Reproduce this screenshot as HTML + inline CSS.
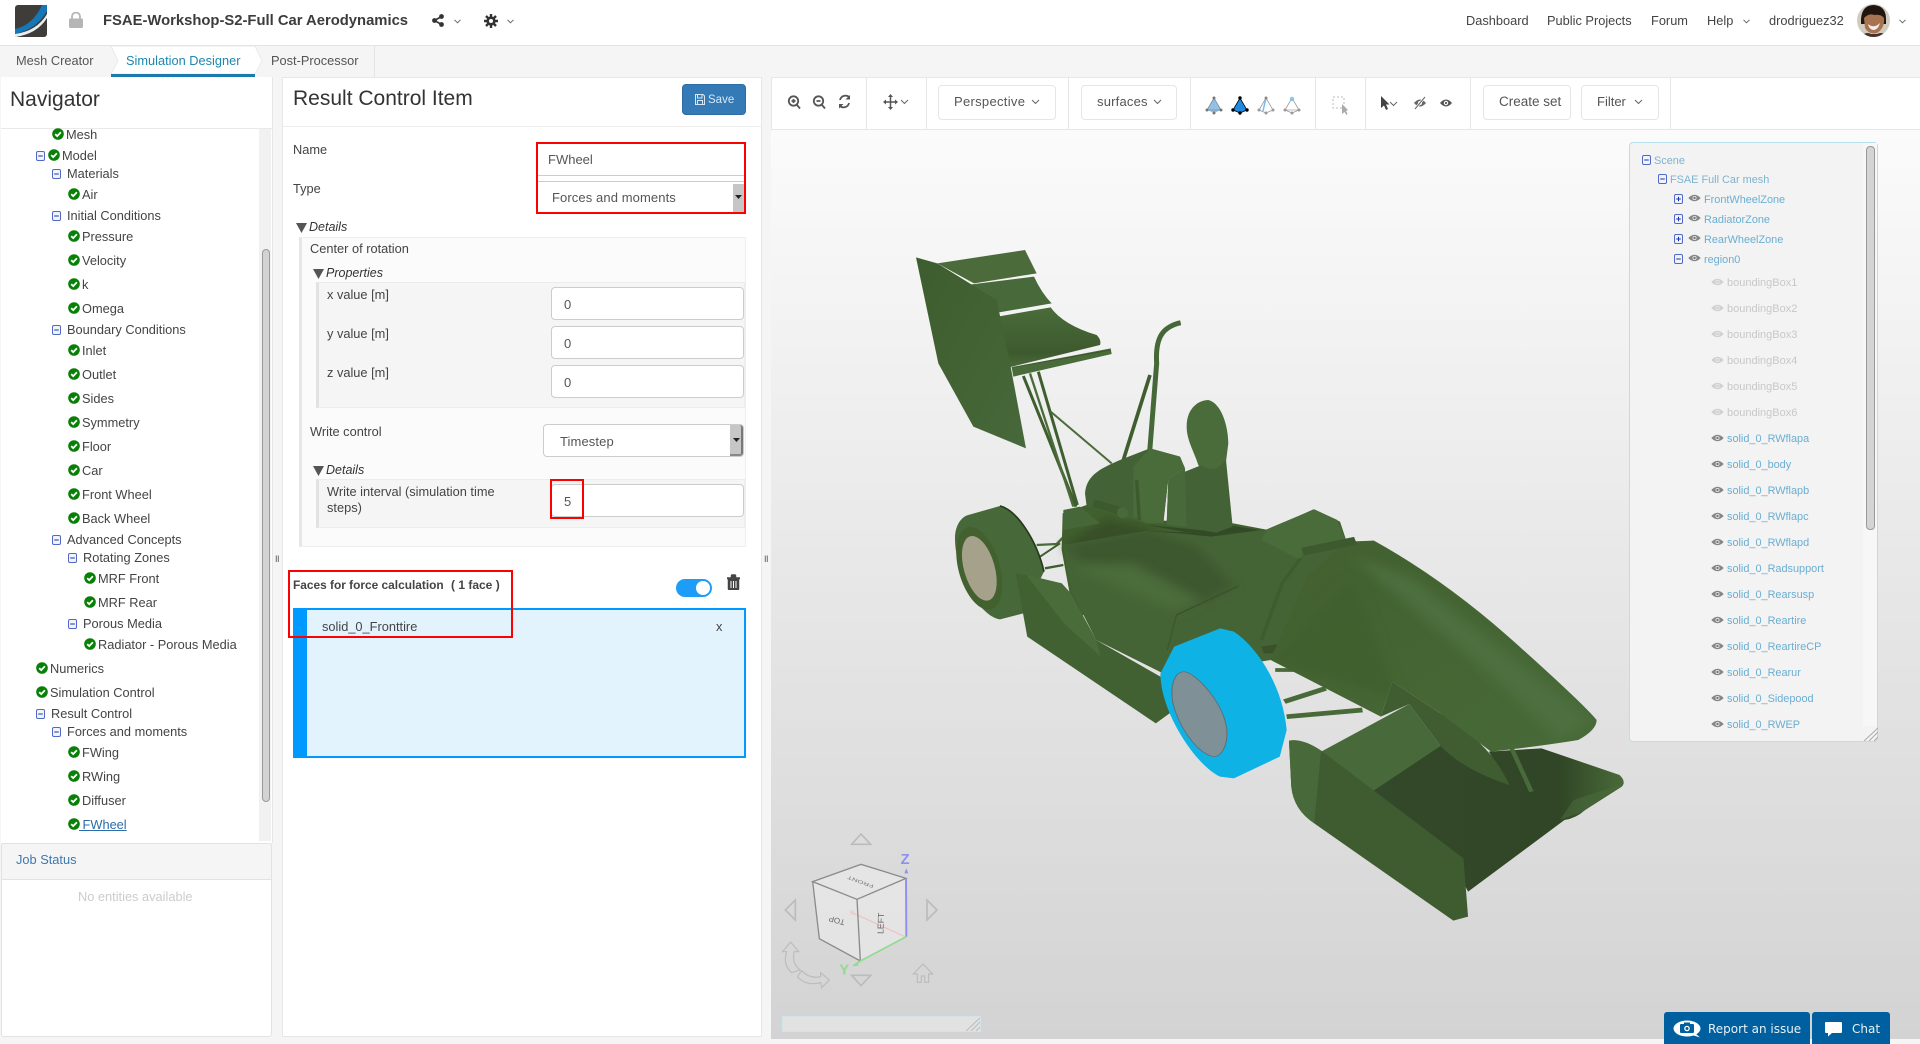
<!DOCTYPE html>
<html><head><meta charset="utf-8"><title>FSAE-Workshop-S2-Full Car Aerodynamics</title>
<style>
html,body{margin:0;padding:0;width:1920px;height:1044px;overflow:hidden;background:#f5f5f5;font-family:"Liberation Sans",sans-serif;font-size:12.8px;color:#444}
.a{position:absolute;box-sizing:border-box}
.t{position:absolute;white-space:nowrap;line-height:16px;height:16px;margin-top:1px}
.i{position:absolute;width:12px;height:12px;overflow:visible}
.b{position:absolute;width:9px;height:10px;overflow:visible}
.e{position:absolute;width:13px;height:8px;overflow:visible}
.s{color:#6aaed2;font-size:10.9px}
.g{color:#c8c8c8;font-size:11px}
.inp{position:absolute;box-sizing:border-box;background:#fff;border:1px solid #ccc;border-radius:4px}
.arial{font-family:"Liberation Sans",sans-serif;color:#555;font-size:13px}
.btn{position:absolute;box-sizing:border-box;background:#fff;border:1px solid #e6e6e6;border-radius:4px;height:35px;top:85px}
.sep{position:absolute;top:77px;height:52px;width:1px;background:#e7e7e7}
</style></head><body>
<svg width="0" height="0" style="position:absolute">
<defs>
<symbol id="c" viewBox="0 0 12 12"><circle cx="6" cy="6" r="5.8" fill="#088008"/><path d="M3.2 6.1 5.2 8.1 8.9 4.2" fill="none" stroke="#fff" stroke-width="1.8"/></symbol>
<symbol id="m" viewBox="0 0 9 10"><rect x=".5" y=".5" width="8" height="9" rx="1.5" fill="#f2f4fb" stroke="#4f69c6"/><path d="M2.2 5h4.6" stroke="#1f2fb0"/></symbol>
<symbol id="p" viewBox="0 0 9 10"><rect x=".5" y=".5" width="8" height="9" rx="1.5" fill="#f2f4fb" stroke="#4f69c6"/><path d="M2.2 5h4.6M4.5 2.7v4.6" stroke="#1f2fb0"/></symbol>
<symbol id="ey" viewBox="0 0 13 8"><path d="M.3 4Q6.5-2.5 12.7 4 6.5 10.5.3 4Z" fill="#858585"/><circle cx="6.5" cy="4" r="2" fill="#eee"/><circle cx="6.5" cy="4" r="1.2" fill="#777"/></symbol>
<symbol id="eg" viewBox="0 0 13 8"><path d="M.3 4Q6.5-2.5 12.7 4 6.5 10.5.3 4Z" fill="#d0d0d0"/><circle cx="6.5" cy="4" r="2" fill="#eee"/><circle cx="6.5" cy="4" r="1.2" fill="#ccc"/></symbol>
<linearGradient id="wg" x1="0" y1="0" x2="0" y2="1"><stop offset="0" stop-color="#4a6b3a"/><stop offset=".75" stop-color="#3d5a2e"/><stop offset="1" stop-color="#4a6b3a"/></linearGradient>
<linearGradient id="ep" x1="0" y1="0" x2="1" y2="1"><stop offset="0" stop-color="#3e5d2e"/><stop offset="1" stop-color="#47683a"/></linearGradient>
<linearGradient id="nb" x1="0" y1="0" x2="1" y2="1"><stop offset="0" stop-color="#42602f"/><stop offset="1" stop-color="#486a38"/></linearGradient>
<linearGradient id="fl" x1="0" y1="0" x2="1" y2="0"><stop offset="0" stop-color="#33492a"/><stop offset=".75" stop-color="#304626"/><stop offset="1" stop-color="#4a6a3a"/></linearGradient>
<filter id="bl" x="-30%" y="-30%" width="160%" height="160%"><feGaussianBlur stdDeviation="14"/></filter>
<clipPath id="noseclip"><path d="M800,230 L880,130 L945,122 Q1100,240 1250,425 Q1400,610 1430,660 Q1430,690 1390,720 Q1300,740 1200,755 L1090,640 L985,545 L960,650 L720,480 Z"/></clipPath>
</defs></svg>

<!-- header -->
<div class="a" style="left:0;top:0;width:1920px;height:46px;background:#fff;border-bottom:1px solid #e4e4e4"></div>
<svg class="a" style="left:15px;top:5px" width="32" height="32" viewBox="0 0 32 32"><rect width="32" height="32" rx="3" fill="#3f3d39"/><path d="M0 24Q18 20 27 0H32V6Q22 24 0 29Z" fill="#1477b8"/><path d="M0 29Q22 26 32 9V13Q22 29 0 32Z" fill="#e8eef2"/></svg>
<svg class="a" style="left:69px;top:12px" width="14" height="16" viewBox="0 0 14 16"><path d="M3 7V4.5a4 4 0 0 1 8 0V7" fill="none" stroke="#b5b5b5" stroke-width="1.8"/><rect y="6.5" width="14" height="9.5" rx="1.2" fill="#b5b5b5"/></svg>
<div class="t" style="left:103px;top:12px;font-weight:bold;font-size:14.8px;color:#3c3c3c">FSAE-Workshop-S2-Full Car Aerodynamics</div>
<svg class="a" style="left:432px;top:14px" width="12" height="13" viewBox="0 0 12 13"><path d="M9.5 2.5 2.5 6.5 9.5 10.5" fill="none" stroke="#333" stroke-width="1.6"/><circle cx="9.5" cy="2.5" r="2.4" fill="#333"/><circle cx="2.5" cy="6.5" r="2.4" fill="#333"/><circle cx="9.5" cy="10.5" r="2.4" fill="#333"/></svg>
<svg class="a" style="left:454px;top:19px" width="7" height="5" viewBox="0 0 7 5"><path d="M.5.8 3.5 3.8 6.5.8" fill="none" stroke="#666"/></svg>
<svg class="a" style="left:484px;top:14px" width="14" height="14" viewBox="0 0 14 14"><path d="M7 0V14M0 7H14M2 2 12 12M12 2 2 12" stroke="#333" stroke-width="2.4"/><circle cx="7" cy="7" r="4.6" fill="#333"/><circle cx="7" cy="7" r="2" fill="#fff"/></svg>
<svg class="a" style="left:507px;top:19px" width="7" height="5" viewBox="0 0 7 5"><path d="M.5.8 3.5 3.8 6.5.8" fill="none" stroke="#666"/></svg>
<div class="t" style="left:1466px;top:12px">Dashboard</div>
<div class="t" style="left:1547px;top:12px">Public Projects</div>
<div class="t" style="left:1651px;top:12px">Forum</div>
<div class="t" style="left:1707px;top:12px">Help</div>
<svg class="a" style="left:1743px;top:19px" width="7" height="5" viewBox="0 0 7 5"><path d="M.5.8 3.5 3.8 6.5.8" fill="none" stroke="#666"/></svg>
<div class="t" style="left:1769px;top:12px">drodriguez32</div>
<svg class="a" style="left:1857px;top:4px" width="33" height="33" viewBox="0 0 33 33"><defs><clipPath id="av"><circle cx="16.500" cy="16.500" r="16.500"/></clipPath></defs><g clip-path="url(#av)"><rect width="33" height="33" fill="#d0ccc0"/><path d="M4 15Q5 1 17 1 29 2 29 15L29 20 4 20Z" fill="#21160f"/><path d="M7 14Q12 9 17 11 24 10 27 14 28 24 20 29 12 31 8 24Z" fill="#a87350"/><path d="M11 20Q17 25 23 19 21 26 16 26 12 25 11 20Z" fill="#f5f0ea"/><path d="M3 33Q9 27 14 30L20 30Q26 27 31 33Z" fill="#4a2f2a"/></g></svg>
<svg class="a" style="left:1899px;top:19px" width="7" height="5" viewBox="0 0 7 5"><path d="M.5.8 3.5 3.8 6.5.8" fill="none" stroke="#666"/></svg>

<!-- tabs -->
<svg class="a" style="left:0;top:46px" width="380" height="31" viewBox="0 0 380 31"><path d="M111 0H255L262 15 255 28H111L118 15Z" fill="#fff" stroke="#eaeaea"/><rect x="111" y="28" width="144" height="3" fill="#1a7cae"/><path d="M374.500 0V31" stroke="#e4e4e4"/></svg>
<div class="t" style="left:16px;top:52px;color:#555">Mesh Creator</div>
<div class="t" style="left:126px;top:52px;color:#1d87ae">Simulation Designer</div>
<div class="t" style="left:271px;top:52px;color:#555">Post-Processor</div>

<!-- navigator -->
<div class="a" style="left:1px;top:77px;width:272px;height:766px;background:#fff;border-right:1px solid #e7e7e7"></div>
<div class="a" style="left:1px;top:128px;width:272px;height:1px;background:#e9e9e9"></div>
<div class="t" style="left:10px;top:87px;line-height:24px;height:24px;font-size:21px;color:#333">Navigator</div>
<div class="a" style="left:259px;top:129px;width:12px;height:712px;background:#f1f1f1"></div>
<div class="a" style="left:262px;top:249px;width:8px;height:553px;background:#d3d3d3;border:1px solid #9a9a9a;border-radius:4px"></div>

<svg class="i" style="left:52px;top:128px"><use href="#c"/></svg><div class="t" style="left:66px;top:126px">Mesh</div>
<svg class="b" style="left:36px;top:151px"><use href="#m"/></svg><svg class="i" style="left:48px;top:149px"><use href="#c"/></svg><div class="t" style="left:62px;top:147px">Model</div>
<svg class="b" style="left:52px;top:169px"><use href="#m"/></svg><div class="t" style="left:67px;top:165px">Materials</div>
<svg class="i" style="left:68px;top:188px"><use href="#c"/></svg><div class="t" style="left:82px;top:186px">Air</div>
<svg class="b" style="left:52px;top:211px"><use href="#m"/></svg><div class="t" style="left:67px;top:207px">Initial Conditions</div>
<svg class="i" style="left:68px;top:230px"><use href="#c"/></svg><div class="t" style="left:82px;top:228px">Pressure</div>
<svg class="i" style="left:68px;top:254px"><use href="#c"/></svg><div class="t" style="left:82px;top:252px">Velocity</div>
<svg class="i" style="left:68px;top:278px"><use href="#c"/></svg><div class="t" style="left:82px;top:276px">k</div>
<svg class="i" style="left:68px;top:302px"><use href="#c"/></svg><div class="t" style="left:82px;top:300px">Omega</div>
<svg class="b" style="left:52px;top:325px"><use href="#m"/></svg><div class="t" style="left:67px;top:321px">Boundary Conditions</div>
<svg class="i" style="left:68px;top:344px"><use href="#c"/></svg><div class="t" style="left:82px;top:342px">Inlet</div>
<svg class="i" style="left:68px;top:368px"><use href="#c"/></svg><div class="t" style="left:82px;top:366px">Outlet</div>
<svg class="i" style="left:68px;top:392px"><use href="#c"/></svg><div class="t" style="left:82px;top:390px">Sides</div>
<svg class="i" style="left:68px;top:416px"><use href="#c"/></svg><div class="t" style="left:82px;top:414px">Symmetry</div>
<svg class="i" style="left:68px;top:440px"><use href="#c"/></svg><div class="t" style="left:82px;top:438px">Floor</div>
<svg class="i" style="left:68px;top:464px"><use href="#c"/></svg><div class="t" style="left:82px;top:462px">Car</div>
<svg class="i" style="left:68px;top:488px"><use href="#c"/></svg><div class="t" style="left:82px;top:486px">Front Wheel</div>
<svg class="i" style="left:68px;top:512px"><use href="#c"/></svg><div class="t" style="left:82px;top:510px">Back Wheel</div>
<svg class="b" style="left:52px;top:535px"><use href="#m"/></svg><div class="t" style="left:67px;top:531px">Advanced Concepts</div>
<svg class="b" style="left:68px;top:553px"><use href="#m"/></svg><div class="t" style="left:83px;top:549px">Rotating Zones</div>
<svg class="i" style="left:84px;top:572px"><use href="#c"/></svg><div class="t" style="left:98px;top:570px">MRF Front</div>
<svg class="i" style="left:84px;top:596px"><use href="#c"/></svg><div class="t" style="left:98px;top:594px">MRF Rear</div>
<svg class="b" style="left:68px;top:619px"><use href="#m"/></svg><div class="t" style="left:83px;top:615px">Porous Media</div>
<svg class="i" style="left:84px;top:638px"><use href="#c"/></svg><div class="t" style="left:98px;top:636px">Radiator - Porous Media</div>
<svg class="i" style="left:36px;top:662px"><use href="#c"/></svg><div class="t" style="left:50px;top:660px">Numerics</div>
<svg class="i" style="left:36px;top:686px"><use href="#c"/></svg><div class="t" style="left:50px;top:684px">Simulation Control</div>
<svg class="b" style="left:36px;top:709px"><use href="#m"/></svg><div class="t" style="left:51px;top:705px">Result Control</div>
<svg class="b" style="left:52px;top:727px"><use href="#m"/></svg><div class="t" style="left:67px;top:723px">Forces and moments</div>
<svg class="i" style="left:68px;top:746px"><use href="#c"/></svg><div class="t" style="left:82px;top:744px">FWing</div>
<svg class="i" style="left:68px;top:770px"><use href="#c"/></svg><div class="t" style="left:82px;top:768px">RWing</div>
<svg class="i" style="left:68px;top:794px"><use href="#c"/></svg><div class="t" style="left:82px;top:792px">Diffuser</div>
<svg class="i" style="left:68px;top:818px"><use href="#c"/></svg><div class="t" style="left:79px;top:816px;color:#2a6ca8;text-decoration:underline">&nbsp;FWheel</div>

<!-- job status -->
<div class="a" style="left:1px;top:843px;width:271px;height:194px;background:#fff;border:1px solid #e2e2e2;border-radius:3px"></div>
<div class="a" style="left:1px;top:843px;width:271px;height:37px;background:#f5f5f5;border:1px solid #e2e2e2;border-radius:3px 3px 0 0"></div>
<div class="t" style="left:16px;top:851px;color:#3d78b0">Job Status</div>
<div class="t" style="left:78px;top:888px;color:#ccc">No entities available</div>
<div class="t" style="left:275px;top:550px;font-size:9px;color:#555;letter-spacing:-.5px">II</div>
<div class="t" style="left:764px;top:550px;font-size:9px;color:#555;letter-spacing:-.5px">II</div>

<!-- result panel -->
<div class="a" style="left:282px;top:77px;width:480px;height:960px;background:#fff;border:1px solid #e7e7e7"></div>
<div class="a" style="left:283px;top:126px;width:478px;height:1px;background:#eee"></div>
<div class="t" style="left:293px;top:86px;line-height:24px;height:24px;font-size:21px;color:#333">Result Control Item</div>
<div class="a" style="left:682px;top:84px;width:64px;height:31px;background:#337ab7;border:1px solid #2e6da4;border-radius:4px"></div>
<svg class="a" style="left:695px;top:94px" width="10" height="11" viewBox="0 0 10 11"><path d="M.5.5H8L9.500 2V10.500H.5ZM2.500.5V4H7V.5M2.500 10.500V6.500H7.500V10.500" fill="none" stroke="#d9e7f3"/></svg>
<div class="t" style="left:708px;top:91px;color:#d9e7f3;font-size:11.5px">Save</div>

<div class="t" style="left:293px;top:141px">Name</div>
<div class="t" style="left:293px;top:180px">Type</div>
<div class="a" style="left:537px;top:175px;width:208px;height:1px;background:#ccc"></div>
<div class="a" style="left:537px;top:181px;width:208px;height:1px;background:#ccc"></div>
<div class="t arial" style="left:548px;top:151px">FWheel</div>
<div class="t arial" style="left:552px;top:189px;letter-spacing:.1px">Forces and moments</div>
<div class="a" style="left:733px;top:184px;width:11px;height:28px;background:#c6c6c6"></div>
<svg class="a" style="left:734px;top:195px" width="9" height="5" viewBox="0 0 9 5"><path d="M1 0H8L4.500 4Z" fill="#222"/></svg>
<div class="a" style="left:536px;top:142px;width:210px;height:72px;border:2px solid #f00"></div>

<svg class="a" style="left:296px;top:223px" width="11" height="10" viewBox="0 0 11 10"><path d="M0 0H11L5.500 10Z" fill="#555"/></svg>
<div class="t" style="left:309px;top:218px;font-style:italic;color:#333;font-size:12.5px">Details</div>
<div class="a" style="left:299px;top:237px;width:447px;height:310px;background:#fbfbfb;border:1px solid #efefef;border-left:3px solid #e6e6e6"></div>
<div class="t" style="left:310px;top:240px">Center of rotation</div>
<svg class="a" style="left:313px;top:269px" width="11" height="10" viewBox="0 0 11 10"><path d="M0 0H11L5.500 10Z" fill="#555"/></svg>
<div class="t" style="left:326px;top:264px;font-style:italic;color:#333;font-size:12.5px">Properties</div>
<div class="a" style="left:316px;top:282px;width:429px;height:126px;background:#f5f5f5;border:1px solid #ececec;border-left:3px solid #e2e2e2"></div>
<div class="t" style="left:327px;top:286px">x value [m]</div>
<div class="t" style="left:327px;top:325px">y value [m]</div>
<div class="t" style="left:327px;top:364px">z value [m]</div>
<div class="inp" style="left:551px;top:287px;width:193px;height:33px"></div><div class="t arial" style="left:564px;top:296px">0</div>
<div class="inp" style="left:551px;top:326px;width:193px;height:33px"></div><div class="t arial" style="left:564px;top:335px">0</div>
<div class="inp" style="left:551px;top:365px;width:193px;height:33px"></div><div class="t arial" style="left:564px;top:374px">0</div>
<div class="t" style="left:310px;top:423px">Write control</div>
<div class="inp" style="left:543px;top:424px;width:201px;height:33px"></div>
<div class="a" style="left:730px;top:425px;width:13px;height:31px;background:#c6c6c6;border-right:2px solid #777;border-bottom:2px solid #888;border-radius:0 3px 3px 0"></div>
<svg class="a" style="left:732px;top:438px" width="9" height="5" viewBox="0 0 9 5"><path d="M1 0H8L4.500 4Z" fill="#222"/></svg>
<div class="t arial" style="left:560px;top:433px;letter-spacing:.1px">Timestep</div>
<svg class="a" style="left:313px;top:466px" width="11" height="10" viewBox="0 0 11 10"><path d="M0 0H11L5.500 10Z" fill="#555"/></svg>
<div class="t" style="left:326px;top:461px;font-style:italic;color:#333;font-size:12.5px">Details</div>
<div class="a" style="left:316px;top:479px;width:429px;height:49px;background:#f5f5f5;border:1px solid #ececec;border-left:3px solid #e2e2e2"></div>
<div class="t" style="left:327px;top:483px">Write interval (simulation time</div>
<div class="t" style="left:327px;top:499px">steps)</div>
<div class="inp" style="left:551px;top:484px;width:193px;height:33px"></div><div class="t arial" style="left:564px;top:493px">5</div>
<div class="a" style="left:550px;top:479px;width:34px;height:40px;border:2px solid #f00"></div>

<div class="t" style="left:293px;top:576px;font-weight:bold;color:#444;font-size:11.9px">Faces for force calculation</div>
<div class="t" style="left:451px;top:576px;font-weight:bold;color:#444;font-size:12px">( 1 face )</div>
<div class="a" style="left:676px;top:579px;width:36px;height:18px;background:#1e9df8;border-radius:9px"></div>
<div class="a" style="left:696px;top:581px;width:14px;height:14px;background:#fff;border-radius:50%"></div>
<svg class="a" style="left:727px;top:574px" width="13" height="16" viewBox="0 0 13 16"><path d="M0 3.500H13V5H12V15a1 1 0 0 1-1 1H2a1 1 0 0 1-1-1V5H0ZM4 3.500V1.500Q4 .5 5 .5H8Q9 .5 9 1.500V3.500" fill="#444" stroke="#444" stroke-width=".5"/><path d="M4 7V14M6.500 7V14M9 7V14" stroke="#fff" stroke-width="1"/></svg>
<div class="a" style="left:293px;top:608px;width:453px;height:150px;background:#e3f3fd;border:2px solid #0099ff;border-left:14px solid #0099ff"></div>
<div class="t" style="left:322px;top:618px;color:#444">solid_0_Fronttire</div>
<div class="t" style="left:716px;top:618px;color:#444">x</div>
<div class="a" style="left:288px;top:570px;width:225px;height:68px;border:2px solid #f00"></div>

<!-- viewer -->
<div class="a" style="left:771px;top:77px;width:1149px;height:53px;background:#fff;border:1px solid #e7e7e7;border-right:0"></div>
<div class="a" style="left:771px;top:130px;width:1149px;height:909px;background:linear-gradient(#fbfbfb,#d3d3d3)"></div>
<div class="sep" style="left:866px"></div><div class="sep" style="left:926px"></div><div class="sep" style="left:1068px"></div><div class="sep" style="left:1190px"></div><div class="sep" style="left:1315px"></div><div class="sep" style="left:1365px"></div><div class="sep" style="left:1470px"></div><div class="sep" style="left:1670px"></div>
<div class="btn" style="left:938px;width:118px"></div>
<div class="t" style="left:954px;top:93px;color:#555;letter-spacing:.3px;font-size:13px">Perspective</div>
<div class="btn" style="left:1081px;width:96px"></div>
<div class="t" style="left:1097px;top:93px;color:#555;letter-spacing:.2px;font-size:13px">surfaces</div>
<div class="btn" style="left:1483px;width:88px"></div>
<div class="t" style="left:1499px;top:93px;color:#555;font-size:13.500px">Create set</div>
<div class="btn" style="left:1581px;width:78px"></div>
<div class="t" style="left:1597px;top:93px;color:#555;font-size:13px">Filter</div>

<svg class="a" style="left:0;top:0" width="1920" height="1044" viewBox="0 0 1920 1044">
<!-- toolbar icons -->
<g fill="none" stroke="#555" stroke-width="1.800">
<circle cx="793.500" cy="101" r="4.700"/><path d="M797 105 800 108.500M791.500 101h4M793.500 99v4" />
<circle cx="818.500" cy="101" r="4.700"/><path d="M822 105 825 108.500M816.500 101h4"/>
<path d="M840 100a5.500 5.500 0 0 1 9.500-2.500M849 103a5.500 5.500 0 0 1-9.500 2.500"/>
<path d="M884 102H897M890.500 95.500V108.500" stroke-width="1.500"/>
</g>
<path d="M850 95V99.500H845.500ZM839 108.500V104H843.500Z" fill="#555"/>
<path d="M890.500 94 893 97H888ZM890.500 110 893 107H888ZM883 102 886 99.500V104.500ZM898 102 895 99.500V104.500Z" fill="#555"/>
<g fill="none" stroke="#666" stroke-width="1"><path d="M901 100 904.500 103.500 908 100M1032 100 1035.500 103.500 1039 100M1154 100 1157.500 103.500 1161 100M1635 100 1638.500 103.500 1642 100M1390 102 1393.500 105.500 1397 102"/></g>
<!-- tetra icons -->
<g>
<path d="M1214 98 1207 110 1214 113 1221 110Z" fill="#8cc4ee"/><path d="M1214 98 1207 110 1221 110Z" fill="#8cc4ee" stroke="#888" stroke-width=".8"/>
<path d="M1214 98 1214 113" stroke="#aac" stroke-width=".6"/><circle cx="1214" cy="98" r="1.500" fill="#777"/><circle cx="1207" cy="110" r="1.500" fill="#777"/><circle cx="1221" cy="110" r="1.500" fill="#777"/><circle cx="1214" cy="113" r="1.500" fill="#777"/>
<path d="M1240 98 1233 110 1240 113 1247 110Z" fill="#1f8ae0" stroke="#000" stroke-width=".8"/><circle cx="1240" cy="98" r="1.700" fill="#000"/><circle cx="1233" cy="110" r="1.700" fill="#000"/><circle cx="1247" cy="110" r="1.700" fill="#000"/><circle cx="1240" cy="113" r="1.700" fill="#000"/>
<path d="M1266 98 1259 110 1266 113 1273 110Z" fill="#fff" stroke="#999" stroke-width=".8"/><path d="M1266 98 1263 111" stroke="#76bdf0" stroke-width="1.500"/><circle cx="1266" cy="98" r="1.500" fill="#888"/><circle cx="1259" cy="110" r="1.500" fill="#999"/><circle cx="1273" cy="110" r="1.500" fill="#999"/><circle cx="1266" cy="113" r="1.500" fill="#999"/>
<path d="M1292 98 1285 110 1292 113 1299 110Z" fill="#fff" stroke="#999" stroke-width=".8"/><path d="M1285 110 1299 110" stroke="#aaa" stroke-width=".8"/><circle cx="1292" cy="99" r="2.200" fill="#8cc4ee"/><circle cx="1285" cy="110" r="1.500" fill="#999"/><circle cx="1299" cy="110" r="1.500" fill="#999"/><circle cx="1292" cy="113" r="1.500" fill="#999"/>
</g>
<rect x="1333" y="97" width="11" height="11" fill="none" stroke="#bbb" stroke-dasharray="2 2"/><path d="M1342 104 1342 114 1344.500 112 1346.500 115 1347.500 114 1346 111 1348 110Z" fill="#aaa"/>
<path d="M1381 96V108L1384 105.500 1386 110 1388 109 1386 104.500H1389.500Z" fill="#444"/>
<g>
<path d="M1414 103Q1420 96 1426 103 1420 110 1414 103Z" fill="#666"/><circle cx="1420" cy="103" r="2" fill="#fff"/><path d="M1415 109 1425 97" stroke="#fff" stroke-width="2.500"/><path d="M1415 109 1425 97" stroke="#666" stroke-width="1"/>
<path d="M1440 103Q1446 96 1452 103 1446 110 1440 103Z" fill="#555"/><circle cx="1446" cy="103" r="2.200" fill="#fff"/><circle cx="1446" cy="103" r="1.100" fill="#555"/>
</g>

<!-- CAR: rear part (coords from 3x crop at 900,230) -->
<g transform="translate(900 230) scale(.33333)">
<path d="M112,100 375,60 410,130 222,160Z" fill="#4b6c3a"/>
<path d="M200,165 402,140 Q425,190 455,220 L280,250Z" fill="#48693a"/>
<path d="M280,262 452,232 Q490,285 590,315 Q605,330 600,345 L315,415 Z" fill="url(#wg)"/>
<path d="M335,412 632,355 635,372 340,440Z" fill="#4a6b3a"/>
<path d="M335,412 632,360" stroke="#2d4220" stroke-width="3" fill="none" opacity=".5"/>
<path d="M48,82 112,100 290,210 330,400 378,655 220,590 115,400Z" fill="url(#ep)"/>
<g fill="none" stroke="#3f5e2f">
<path d="M370,438 528,830" stroke-width="9"/><path d="M390,430 520,830" stroke-width="7" stroke="#4a6b3a"/><path d="M415,425 532,825" stroke-width="9"/>
<path d="M452,545 635,700" stroke-width="6" stroke="#4a6b3a"/>
<path d="M670,690 750,435" stroke-width="11"/>
<path d="M732,880 770,400 C765,320 790,290 842,278" stroke-width="15" stroke="#466838"/>
<path d="M410,945 470,942 560,850" stroke-width="7" stroke="#4a6b3a"/><path d="M420,980 480,940" stroke-width="6"/><path d="M435,1015 490,1005" stroke-width="7"/>
</g>
<!-- filler body under cockpit -->
<path d="M485,960 488,850 560,825 740,870 1000,880 1105,900 1240,838 1320,875 1340,935 1100,1250 520,1150Z" fill="#41602f"/>
<path d="M490,945 620,865 740,895 800,960 1000,1080 800,1040 600,980Z" fill="#384f28" filter="url(#bl)"/>
<path d="M740,885 950,905 1000,888 1092,902 1040,920 880,910Z" fill="#334a26"/>
<path d="M490,840 540,830 600,880 490,900Z" fill="#466838"/>
<path d="M555,790 C560,740 590,720 660,690 L750,655 840,680 855,715 805,745 790,880 740,880 560,830Z" fill="#436235"/>
<path d="M700,710 750,655 840,680 855,715 805,745 790,880 740,880 700,860Z" fill="#4a6b3a"/>
<path d="M710,750 718,870" stroke="#3d5a2e" stroke-width="10" fill="none"/>
<path d="M580,820 680,848" stroke="#3c5a2d" stroke-width="24" fill="none"/><circle cx="668" cy="848" r="17" fill="#48693a"/>
<path d="M860,590 C860,530 900,510 925,510 C965,520 985,590 985,640 L978,695 C950,725 910,730 895,705 C880,660 860,630 860,590Z" fill="#4a6c3a"/>
<path d="M805,745 905,705 Q940,735 978,690 L998,890 950,908 800,885Z" fill="#436235"/>
<path d="M805,745 855,715 860,890 800,885Z" fill="#48693a"/>
<path d="M165,925 C165,885 185,860 205,855 L300,828 C350,840 410,930 432,1025 L370,1150 L300,1168 C240,1160 165,1030 165,925Z" fill="#476838"/>
<path d="M300,828 C350,840 410,930 432,1025" fill="none" stroke="#263a1b" stroke-width="5"/>
<ellipse cx="238" cy="1015" rx="62" ry="128" transform="rotate(-16 238 1015)" fill="#42612f"/>
<ellipse cx="238" cy="1015" rx="46" ry="100" transform="rotate(-16 238 1015)" fill="#a6a18b"/>
</g>

<!-- CAR: front part (crop at 940,500: x scale .4592 y scale .3333) -->
<g transform="translate(940 500) scale(.45918 .33333)">
<path d="M1195,755 1310,745 1480,825 Q1495,845 1485,860 L1405,930 Q1385,955 1360,960 L1150,1175 1120,1095 925,885 1090,735 1240,855Z" fill="url(#fl)"/>
<path d="M1380,900 1490,850 1400,935 1350,960Z" fill="#4a6a3a" opacity=".6"/>
<path d="M810,770 1022,612 1090,738 925,890Z" fill="#48693a"/>
<path d="M760,722 Q790,715 830,752 L1140,1075 1150,1250 1118,1262 820,975 Q770,930 765,860Z" fill="#3f5c30"/>
<path d="M760,722 Q790,715 830,752 L815,970 Q770,930 765,860Z" fill="#48693a"/>
<g fill="none" stroke="#486938">
<path d="M730,510 885,510" stroke-width="11"/><path d="M750,605 840,565" stroke-width="14"/><path d="M755,650 920,630" stroke-width="14"/>
</g>
<path d="M985,545 1090,640 Q1200,730 1240,855 Q1140,810 1090,738 L1022,612 960,650Z" fill="#3f5d30"/>
<path d="M1215,655 1288,875" stroke-width="10" stroke="#496a3a" fill="none"/>
<path d="M165,220 188,225 265,250 285,280 340,420 480,530 520,620 470,670 190,410Z" fill="#426132"/>
<path d="M188,225 265,250 285,280 340,420 350,470 270,370Z" fill="#4a6b3a"/>
<path d="M268,135 450,92 600,100 712,88 815,28 865,60 885,125 945,122 720,480 500,530 340,420 285,270Z" fill="#456436"/>
<path d="M270,135 450,90 560,140 640,260 515,345 420,230 300,180Z" fill="#395029" filter="url(#bl)" opacity=".6"/>
<path d="M290,200 420,190 570,300 515,345 400,270Z" fill="#4b6c3a" filter="url(#bl)"/>
<path d="M440,92 600,100 712,88 590,110 520,100Z" fill="#334a26"/>
<path d="M712,88 815,28 865,60 885,125 790,155 785,180 700,120Z" fill="#4a6b3a"/>
<path d="M800,230 880,130 945,122 Q1100,240 1250,425 Q1400,610 1430,660 Q1430,690 1390,720 Q1300,740 1200,755 L1090,640 985,545 960,650 720,480Z" fill="url(#nb)"/>
<g clip-path="url(#noseclip)"><path d="M900,170 1030,240 1420,660 1350,720 1180,500Z" fill="#4e7040" filter="url(#bl)"/><path d="M720,480 900,230 1000,600Z" fill="#41602f" filter="url(#bl)"/></g>
<path d="M515,345 650,258" fill="none" stroke="#3a5229" stroke-width="4"/>
<path d="M515,345 495,450" fill="none" stroke="#3d5630" stroke-width="3"/>
<path d="M790,155 905,122" fill="none" stroke="#3d5a2e" stroke-width="24"/>
<path d="M785,175 745,250 700,420" fill="none" stroke="#3f5c2f" stroke-width="8"/>
<path d="M700,440 735,432 725,460 705,460Z" fill="#3a5229"/>
<path d="M510,440 610,385 640,395 C680,430 745,540 755,690 L740,770 640,835 610,830 C560,800 480,640 480,520Z" fill="#0fb2e4"/>
<path d="M505,580 C505,540 515,515 532,515 C560,520 625,620 625,700 C625,745 610,772 595,770 C555,760 505,650 505,580Z" fill="#7f9097" stroke="#5d6b6f" stroke-width="2"/>
</g>

<!-- nav cube (crop at 770,820 3x) -->
<g transform="translate(770 820) scale(.33333)" fill="none">
<g fill="none" stroke="#bcbcbc" stroke-width="5">
<path d="M245,73 273,42 302,73Z"/><path d="M76,240 46,270 76,300Z"/><path d="M471,240 501,270 471,300Z"/><path d="M245,466 302,466 273,497Z"/>
<path d="M430,462 459,432 488,462 476,462 476,487 464,487 464,468 454,468 454,487 442,487 442,462Z" stroke-width="3.500"/>
<path d="M65,458C45,440 42,420 50,395H38L62,366 86,395H72C68,420 72,435 90,450Z" stroke-width="3.500"/>
<path d="M82,470C100,490 125,495 152,488L155,503 178,480 152,458V470C130,475 110,468 95,452Z" stroke-width="3.500"/>
</g>
<path d="M128,185 273,133 408,175 409,350 271,423 148,356Z" fill="#e6e6e6" opacity=".85"/>
<path d="M240,275 405,350" stroke="#edc6c6" stroke-width="4"/>
<path d="M128,185 273,133 408,175 261,238Z M128,185 148,356 271,423 261,238" stroke="#8b8b8b" stroke-width="4"/>
<path d="M408,175 409,350" stroke="#9191ee" stroke-width="6"/><path d="M409,145 415,160 403,160Z" fill="#9191ee"/>
<path d="M409,350 271,423 250,437" stroke="#8fdc8f" stroke-width="5"/><path d="M247,439 262,426 266,436Z" fill="#8fdc8f"/>
<text x="392" y="132" font-family="Liberation Sans" font-weight="bold" font-size="44" fill="#9090ee">Z</text>
<text x="208" y="463" font-family="Liberation Sans" font-weight="bold" font-size="44" fill="#8fdc8f">Y</text>
<text x="238" y="287" font-family="Liberation Sans" font-size="26" fill="#efc9c9">X</text>
<text x="0" y="0" transform="translate(226 300) rotate(195)" font-family="Liberation Sans" font-size="24" fill="#666">TOP</text>
<text x="0" y="0" transform="translate(340 342) rotate(-88)" font-family="Liberation Sans" font-size="26" fill="#666">LEFT</text>
<text x="0" y="0" transform="translate(312 195) rotate(200) scale(1 .6)" font-family="Liberation Sans" font-size="24" fill="#777">FRONT</text>
</g>
</svg>

<!-- scene tree -->
<div class="a" style="left:1629px;top:142px;width:249px;height:600px;background:#f3f3f3;border:1px solid #b7dfee;border-radius:4px"></div>
<div class="a" style="left:1863px;top:143px;width:14px;height:583px;background:#f7f7f7"></div>
<div class="a" style="left:1866px;top:146px;width:9px;height:384px;background:#d4d4d4;border:1px solid #999;border-radius:4px"></div>
<svg class="a" style="left:1863px;top:727px" width="15" height="14" viewBox="0 0 15 14"><path d="M1 14 15 1M6 14 15 5M11 14 15 10" stroke="#aaa"/></svg>
<svg class="b" style="left:1642px;top:155px"><use href="#m"/></svg><div class="t s" style="left:1654px;top:152px;color:#7fb3ce">Scene</div>
<svg class="b" style="left:1658px;top:174px"><use href="#m"/></svg><div class="t s" style="left:1670px;top:171px;color:#7fb3ce">FSAE Full Car mesh</div>
<svg class="b" style="left:1674px;top:194px"><use href="#p"/></svg><svg class="e" style="left:1688px;top:194px"><use href="#ey"/></svg><div class="t s" style="left:1704px;top:191px">FrontWheelZone</div>
<svg class="b" style="left:1674px;top:214px"><use href="#p"/></svg><svg class="e" style="left:1688px;top:214px"><use href="#ey"/></svg><div class="t s" style="left:1704px;top:211px">RadiatorZone</div>
<svg class="b" style="left:1674px;top:234px"><use href="#p"/></svg><svg class="e" style="left:1688px;top:234px"><use href="#ey"/></svg><div class="t s" style="left:1704px;top:231px">RearWheelZone</div>
<svg class="b" style="left:1674px;top:254px"><use href="#m"/></svg><svg class="e" style="left:1688px;top:254px"><use href="#ey"/></svg><div class="t s" style="left:1704px;top:251px">region0</div>
<svg class="e" style="left:1711px;top:278px"><use href="#eg"/></svg><div class="t g" style="left:1727px;top:274px">boundingBox1</div>
<svg class="e" style="left:1711px;top:304px"><use href="#eg"/></svg><div class="t g" style="left:1727px;top:300px">boundingBox2</div>
<svg class="e" style="left:1711px;top:330px"><use href="#eg"/></svg><div class="t g" style="left:1727px;top:326px">boundingBox3</div>
<svg class="e" style="left:1711px;top:356px"><use href="#eg"/></svg><div class="t g" style="left:1727px;top:352px">boundingBox4</div>
<svg class="e" style="left:1711px;top:382px"><use href="#eg"/></svg><div class="t g" style="left:1727px;top:378px">boundingBox5</div>
<svg class="e" style="left:1711px;top:408px"><use href="#eg"/></svg><div class="t g" style="left:1727px;top:404px">boundingBox6</div>
<svg class="e" style="left:1711px;top:434px"><use href="#ey"/></svg><div class="t s" style="left:1727px;top:430px">solid_0_RWflapa</div>
<svg class="e" style="left:1711px;top:460px"><use href="#ey"/></svg><div class="t s" style="left:1727px;top:456px">solid_0_body</div>
<svg class="e" style="left:1711px;top:486px"><use href="#ey"/></svg><div class="t s" style="left:1727px;top:482px">solid_0_RWflapb</div>
<svg class="e" style="left:1711px;top:512px"><use href="#ey"/></svg><div class="t s" style="left:1727px;top:508px">solid_0_RWflapc</div>
<svg class="e" style="left:1711px;top:538px"><use href="#ey"/></svg><div class="t s" style="left:1727px;top:534px">solid_0_RWflapd</div>
<svg class="e" style="left:1711px;top:564px"><use href="#ey"/></svg><div class="t s" style="left:1727px;top:560px">solid_0_Radsupport</div>
<svg class="e" style="left:1711px;top:590px"><use href="#ey"/></svg><div class="t s" style="left:1727px;top:586px">solid_0_Rearsusp</div>
<svg class="e" style="left:1711px;top:616px"><use href="#ey"/></svg><div class="t s" style="left:1727px;top:612px">solid_0_Reartire</div>
<svg class="e" style="left:1711px;top:642px"><use href="#ey"/></svg><div class="t s" style="left:1727px;top:638px">solid_0_ReartireCP</div>
<svg class="e" style="left:1711px;top:668px"><use href="#ey"/></svg><div class="t s" style="left:1727px;top:664px">solid_0_Rearur</div>
<svg class="e" style="left:1711px;top:694px"><use href="#ey"/></svg><div class="t s" style="left:1727px;top:690px">solid_0_Sidepood</div>
<svg class="e" style="left:1711px;top:720px"><use href="#ey"/></svg><div class="t s" style="left:1727px;top:716px">solid_0_RWEP</div>

<!-- bottom-left mini panel -->
<div class="a" style="left:782px;top:1016px;width:199px;height:16px;background:rgba(235,235,235,.6);border:1px solid #d2e4ea"></div>
<svg class="a" style="left:965px;top:1017px" width="15" height="14" viewBox="0 0 15 14"><path d="M1 14 15 1M6 14 15 5M11 14 15 10" stroke="#bbb"/></svg>

<!-- report/chat -->
<div class="a" style="left:1664px;top:1012px;width:146px;height:32px;background:#005f9e;border-radius:3px 3px 0 0"></div>
<div class="a" style="left:1812px;top:1012px;width:78px;height:32px;background:#005f9e;border-radius:3px 3px 0 0"></div>
<svg class="a" style="left:1673px;top:1020px" width="28" height="18" viewBox="0 0 28 18"><ellipse cx="14" cy="8.500" rx="13.500" ry="8" fill="#fff"/><path d="M22 13 27 17.500 19 15Z" fill="#fff"/><rect x="7" y="4" width="14" height="9" rx="1" fill="#005f9e"/><rect x="11" y="2.500" width="6" height="2" fill="#005f9e"/><circle cx="14" cy="8.500" r="2.800" fill="#fff"/><circle cx="14" cy="8.500" r="1.500" fill="#005f9e"/></svg>
<div class="t" style="left:1708px;top:1020px;color:#e8f1f7;font-family:'DejaVu Sans',sans-serif;font-size:12px">Report an issue</div>
<svg class="a" style="left:1825px;top:1022px" width="17" height="15" viewBox="0 0 17 15"><path d="M1 0H16Q17 0 17 1V10Q17 11 16 11H7L3 14.500V11H1Q0 11 0 10V1Q0 0 1 0Z" fill="#fff"/></svg>
<div class="t" style="left:1852px;top:1020px;color:#e8f1f7;font-family:'DejaVu Sans',sans-serif;font-size:12px">Chat</div>
</body></html>
